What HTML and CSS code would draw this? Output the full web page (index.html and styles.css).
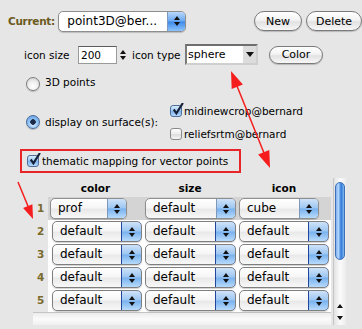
FILE: index.html
```html
<!DOCTYPE html>
<html lang="en">
<head>
    <meta charset="UTF-8">
    <title>Vector points</title>
    <link rel="stylesheet" href="styles.css">
</head>
<body>
    <!-- current layer + new/delete -->
    <div class="top-row">
        <span class="current-label">Current:</span>
        <div class="popup popup-current">
            <span class="popup-text">point3D@ber...</span>
            <span class="popup-btn"><i class="tri-up"></i><i class="tri-down"></i></span>
        </div>
        <div class="top-buttons">
            <button class="pill pill-new">New</button>
            <button class="pill pill-delete">Delete</button>
        </div>
    </div>

    <!-- icon settings -->
    <div class="icon-row">
        <span class="lbl-size">icon size</span>
        <div class="spin">
            <span class="spin-field">200</span>
            <span class="spin-btn"><i class="tri-up"></i><i class="tri-down"></i></span>
        </div>
        <span class="lbl-type">icon type</span>
        <div class="combo">
            <span class="combo-field">sphere</span>
            <span class="combo-btn"><i class="tri-down big"></i></span>
        </div>
        <button class="pill pill-color">Color</button>
    </div>

    <div class="radio-row">
        <span class="radio"></span>
        <span class="radio-label">3D points</span>
    </div>

    <div class="surface-row">
        <div class="surface-left">
            <span class="radio on"></span>
            <span>display on surface(s):</span>
        </div>
        <div class="surface-list">
            <div class="check-line">
                <span class="check on"><svg viewBox="0 0 12 12"><path d="M2.5 6 L5 9.5 L11 0"/></svg></span>
                <span>midinewcrop@bernard</span>
            </div>
            <div class="check-line">
                <span class="check"></span>
                <span>reliefsrtm@bernard</span>
            </div>
        </div>
    </div>

    <div class="thematic-box">
        <span class="check on"><svg viewBox="0 0 12 12"><path d="M2.5 6 L5 9.5 L11 0"/></svg></span>
        <span>thematic mapping for vector points</span>
    </div>

    <!-- per-category mapping table -->
    <div class="mapping">
        <div class="table-area">
            <div class="map-grid">
                <span class="head"></span>
                <span class="head">color</span>
                <span class="head">size</span>
                <span class="head">icon</span>

                <span class="num">1</span>
                <div class="cell sel first"><div class="popup w-prof"><span class="popup-text">prof</span><span class="popup-btn"><i class="tri-up"></i><i class="tri-down"></i></span></div></div>
                <div class="cell sel"><div class="popup w-size"><span class="popup-text">default</span><span class="popup-btn"><i class="tri-up"></i><i class="tri-down"></i></span></div></div>
                <div class="cell sel"><div class="popup w-cube"><span class="popup-text">cube</span><span class="popup-btn"><i class="tri-up"></i><i class="tri-down"></i></span></div></div>

                <span class="num">2</span>
                <div class="cell first"><div class="popup dark w-col"><span class="popup-text">default</span><span class="popup-btn"><i class="tri-up"></i><i class="tri-down"></i></span></div></div>
                <div class="cell"><div class="popup dark w-size"><span class="popup-text">default</span><span class="popup-btn"><i class="tri-up"></i><i class="tri-down"></i></span></div></div>
                <div class="cell"><div class="popup dark w-col"><span class="popup-text">default</span><span class="popup-btn"><i class="tri-up"></i><i class="tri-down"></i></span></div></div>

                <span class="num">3</span>
                <div class="cell first"><div class="popup dark w-col"><span class="popup-text">default</span><span class="popup-btn"><i class="tri-up"></i><i class="tri-down"></i></span></div></div>
                <div class="cell"><div class="popup dark w-size"><span class="popup-text">default</span><span class="popup-btn"><i class="tri-up"></i><i class="tri-down"></i></span></div></div>
                <div class="cell"><div class="popup dark w-col"><span class="popup-text">default</span><span class="popup-btn"><i class="tri-up"></i><i class="tri-down"></i></span></div></div>

                <span class="num">4</span>
                <div class="cell first"><div class="popup dark w-col"><span class="popup-text">default</span><span class="popup-btn"><i class="tri-up"></i><i class="tri-down"></i></span></div></div>
                <div class="cell"><div class="popup dark w-size"><span class="popup-text">default</span><span class="popup-btn"><i class="tri-up"></i><i class="tri-down"></i></span></div></div>
                <div class="cell"><div class="popup dark w-col"><span class="popup-text">default</span><span class="popup-btn"><i class="tri-up"></i><i class="tri-down"></i></span></div></div>

                <span class="num">5</span>
                <div class="cell first"><div class="popup dark w-col"><span class="popup-text">default</span><span class="popup-btn"><i class="tri-up"></i><i class="tri-down"></i></span></div></div>
                <div class="cell"><div class="popup dark w-size"><span class="popup-text">default</span><span class="popup-btn"><i class="tri-up"></i><i class="tri-down"></i></span></div></div>
                <div class="cell"><div class="popup dark w-col"><span class="popup-text">default</span><span class="popup-btn"><i class="tri-up"></i><i class="tri-down"></i></span></div></div>
            </div>
            <div class="hscroll"></div>
        </div>
        <div class="vscroll">
            <div class="vthumb"></div>
            <div class="varrows">
                <i class="tri-up"></i>
                <i class="tri-down"></i>
            </div>
        </div>
    </div>

    <!-- red annotation arrows drawn on top -->
    <svg class="annot" width="362" height="329" viewBox="0 0 362 329">
        <line x1="18" y1="182" x2="30" y2="211"/>
        <polygon points="33,219 23.1,207.9 32.4,204.2"/>
        <line x1="235" y1="81" x2="266" y2="158"/>
        <polygon points="231,71 231.7,89 242.9,84.6"/>
        <polygon points="270,168 258.1,154.4 269.3,150"/>
    </svg>
</body>
</html>
```

FILE: styles.css
```css
* {
    margin: 0;
    padding: 0;
    box-sizing: border-box;
}

body {
    width: 362px;
    height: 329px;
    position: relative;
    overflow: hidden;
    background: #e6e6e6;
    font: 10.5px "DejaVu Sans", sans-serif;
    color: #000;
}

button {
    font: inherit;
    color: inherit;
}

/* small triangles used by popups, steppers and scroll arrows */
.tri-up,
.tri-down {
    display: block;
    width: 0;
    height: 0;
    border-left: 3px solid transparent;
    border-right: 3px solid transparent;
}

.tri-up {
    border-bottom: 4px solid #111;
}

.tri-down {
    border-top: 4px solid #111;
}

.tri-down.big {
    border-left-width: 4px;
    border-right-width: 4px;
    border-top-width: 5px;
}

/* ---------- top row ---------- */
.top-row {
    display: flex;
    align-items: center;
    height: 32px;
    padding: 10px 0 0 8px;
}

.current-label {
    width: 52px;
    font-weight: bold;
    color: #6b5a1c;
    letter-spacing: -0.3px;
}

.popup {
    display: flex;
    height: 21px;
    border: 1px solid #8e8e8e;
    border-radius: 5px;
    overflow: hidden;
    background: linear-gradient(#ffffff, #f6f6f6 45%, #e9e9e9 55%, #f8f8f8);
    box-shadow: 0 1px 1px rgba(0, 0, 0, 0.18);
}

.popup-text {
    flex: 1;
    padding-left: 7px;
    font-size: 12px;
    line-height: 19px;
    white-space: nowrap;
    overflow: hidden;
}

.popup-btn {
    width: 19px;
    display: flex;
    flex-direction: column;
    align-items: center;
    justify-content: center;
    gap: 2px;
    border-left: 1px solid #7e98bb;
    background: linear-gradient(#cfe3f9, #9cc6f2 48%, #78b1ee 52%, #b8dbfb);
}

.popup-current {
    width: 132px;
    background: #fff;
}

.popup-current .popup-text {
    padding-left: 8px;
}

.popup-current .popup-btn {
    width: 18px;
    background: linear-gradient(#b9d8fb, #6aa8f0 48%, #3f8ae8 52%, #8cc3fb);
}

.popup.dark {
    border-color: #7f7f7f;
}

.popup.dark .popup-btn {
    border: 1px solid #23469a;
    border-radius: 0 5px 5px 0;
    margin: -1px -1px -1px 0;
    width: 21px;
}

.top-buttons {
    display: flex;
    gap: 4px;
    margin-left: 68px;
}

.pill {
    height: 20px;
    border: 1px solid #7a7a7a;
    border-radius: 10px;
    background: linear-gradient(#ffffff, #f3f3f3 45%, #e2e2e2 55%, #f7f7f7);
    box-shadow: 0 1px 1px rgba(0, 0, 0, 0.2);
    font-size: 11px;
    white-space: nowrap;
}

.pill-new {
    width: 48px;
}

.pill-delete {
    width: 56px;
    flex-shrink: 0;
}

/* ---------- icon size / type ---------- */
.icon-row {
    display: flex;
    align-items: center;
    height: 21px;
    margin-top: 12px;
    padding-left: 24px;
}

.lbl-size {
    width: 54px;
}

.spin {
    display: flex;
    align-items: center;
    width: 50px;
    height: 18px;
}

.spin-field {
    width: 39px;
    height: 18px;
    padding-left: 2px;
    line-height: 16px;
    background: #fff;
    border: 1px solid #9a9a9a;
    border-top-color: #5c5c5c;
}

.spin-btn {
    display: flex;
    flex-direction: column;
    align-items: center;
    gap: 2px;
    width: 11px;
}

.lbl-type {
    width: 57px;
    padding-left: 4px;
    white-space: nowrap;
}

.combo {
    display: flex;
    width: 73px;
    height: 21px;
    background: #fff;
    border: 2px solid #cfcfcf;
    border-top-color: #6e6e6e;
    border-left-color: #7a7a7a;
}

.combo-field {
    flex: 1;
    padding-left: 1px;
    line-height: 17px;
    font-size: 11px;
}

.combo-btn {
    width: 13px;
    display: flex;
    align-items: center;
    justify-content: center;
    background: #dcdcdc;
}

.pill-color {
    width: 54px;
    height: 18px;
    margin-left: 11px;
    font-size: 11px;
}

/* ---------- radios and checkboxes ---------- */
.radio-row {
    display: flex;
    align-items: center;
    gap: 5px;
    height: 16px;
    margin-top: 11px;
    padding-left: 26px;
}

.radio-label {
    margin-top: -5px;
}

.radio {
    width: 14px;
    height: 14px;
    flex-shrink: 0;
    border-radius: 50%;
    border: 1px solid #7d7d7d;
    background: radial-gradient(circle at 50% 70%, #ffffff, #f0f0f0 45%, #c9c9c9);
    box-shadow: 0 1px 1px rgba(0, 0, 0, 0.2);
}

.radio.on {
    border-color: #4a6a98;
    background: radial-gradient(circle, #1c2c48 0 2.5px, transparent 3px),
                radial-gradient(circle at 50% 70%, #d6ebff, #8cc0f3 50%, #5c98dc);
}

.surface-row {
    display: flex;
    margin-top: 7px;
    padding-left: 26px;
}

.surface-left {
    display: flex;
    align-items: center;
    gap: 5px;
    width: 144px;
}

.check-line {
    display: flex;
    align-items: center;
    gap: 2px;
    height: 23px;
}

.check {
    position: relative;
    width: 12px;
    height: 12px;
    flex-shrink: 0;
    border-radius: 3px;
    border: 1px solid #8a8a8a;
    background: linear-gradient(#ffffff, #ececec 50%, #dedede 55%, #f6f6f6);
}

.check.on {
    border-color: #4d6f9f;
    background: linear-gradient(#d8ebfd, #9ec8f3 48%, #7cb2ec 52%, #b7dafb);
}

.check svg {
    position: absolute;
    left: 0;
    top: -3px;
    width: 13px;
    height: 13px;
    fill: none;
    stroke: #152238;
    stroke-width: 2;
}

.thematic-box {
    display: flex;
    align-items: center;
    gap: 3px;
    width: 221px;
    height: 24px;
    margin: 4px 0 0 20px;
    padding-left: 5px;
    border: 2px solid #e8262a;
}

/* ---------- mapping table ---------- */
.mapping {
    display: flex;
    margin-top: 5px;
    padding-left: 33px;
}

.table-area {
    width: 300px;
}

.map-grid {
    display: grid;
    grid-template-columns: 15px 95px 94px 94px;
    grid-template-rows: 19px repeat(5, 23px);
}

.head {
    font-weight: bold;
    font-size: 10.5px;
    text-align: center;
    line-height: 20px;
}

.num {
    padding-left: 4px;
    font-weight: bold;
    color: #7a6a2c;
    line-height: 23px;
}

.cell {
    display: flex;
    align-items: center;
    padding-left: 2px;
    background: #fff;
}

.cell.first {
    padding-left: 4px;
}

.cell.sel {
    background: #d4d4d4;
}

.cell.sel.first {
    padding-left: 2px;
}

.w-prof {
    width: 77px;
}

.w-size {
    width: 91px;
}

.w-col {
    width: 90px;
}

.w-cube {
    width: 80px;
}

.hscroll {
    width: 298px;
    height: 13px;
    border-top: 1px solid #c4c4c4;
    background: linear-gradient(#ececec, #fbfbfb 50%, #f0f0f0);
}

.vscroll {
    display: flex;
    flex-direction: column;
    width: 13px;
    height: 147px;
    border-left: 1px solid #c6c6c6;
    background: linear-gradient(to right, #e2e2e2, #fbfbfb 50%, #ececec);
}

.vthumb {
    height: 78px;
    margin: 4px 1px 0;
    border-radius: 6px;
    border: 1px solid #3d6fb8;
    background: linear-gradient(to right, #7fb0ee, #b5d6fb 30%, #4d8fe2 55%, #3a7fd8 70%, #86bbf3);
}

.varrows {
    display: flex;
    flex-direction: column;
    align-items: center;
    gap: 8px;
    margin-top: auto;
    padding-bottom: 5px;
}

/* ---------- annotation ---------- */
.annot {
    position: absolute;
    left: 0;
    top: 0;
    pointer-events: none;
}

.annot line {
    stroke: #f51d1d;
    stroke-width: 1.5;
}

.annot polygon {
    fill: #f51d1d;
}
```
